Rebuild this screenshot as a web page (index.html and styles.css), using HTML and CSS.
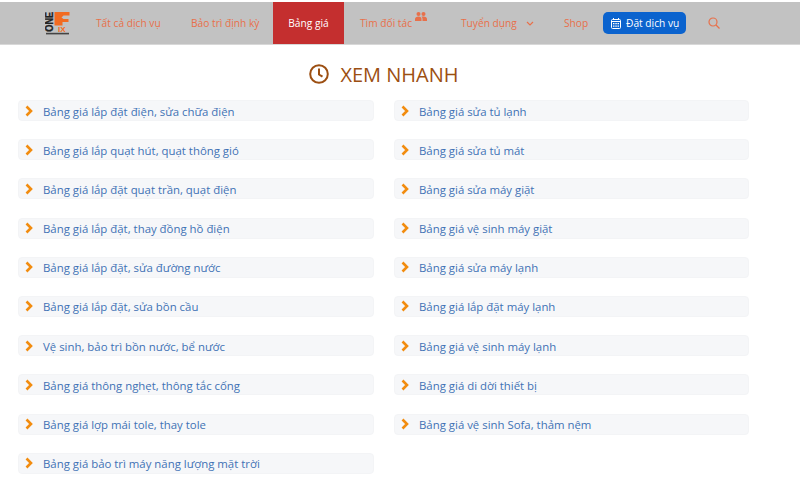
FILE: index.html
```html
<!DOCTYPE html>
<html lang="vi">
<head>
<meta charset="UTF-8">
<meta name="viewport" content="width=device-width, initial-scale=1.0">
<title>Bảng giá</title>
<link rel="stylesheet" href="styles.css">
</head>
<body>
<nav class="topnav">
    <a class="logo" href="#">
        <svg width="26" height="24" viewBox="0 0 26 24">
            <text class="logo-one" transform="translate(7.500 20.800) rotate(-90)" x="0" y="0" textLength="20" lengthAdjust="spacingAndGlyphs">ONE</text>
            <path d="M9.500 1h15v3.500h-6l-2 2 2 1.500h5v3h-6v3.500h-8z" fill="#f26b21"/>
            <text class="logo-fix" x="13" y="21">IX</text>
            <rect x="1" y="21.800" width="23" height="1.600" fill="#444"/>
        </svg>
    </a>
    <a class="nav-link link-services" href="#">Tất cả dịch vụ</a>
    <a class="nav-link link-maint" href="#">Bảo trì định kỳ</a>
    <a class="nav-link active" href="#">Bảng giá</a>
    <a class="nav-link link-partner" href="#">Tìm đối tác
        <svg class="people" width="12" height="9" viewBox="0 0 12 9"><circle cx="3.500" cy="2" r="2"/><circle cx="8.500" cy="2" r="2"/><path d="M0 9v-2c0-1.500 1.500-2.500 3.500-2.500s3 1 3 2.500v2zM7.500 9v-2c0-1-.3-1.800-1-2.300.6-.2 1.300-.2 2-.2 2 0 3.500 1 3.500 2.500v2z"/></svg>
    </a>
    <a class="nav-link link-jobs" href="#">Tuyển dụng
        <svg class="caret" width="8" height="5" viewBox="0 0 8 5"><path d="M1 1l3 3 3-3" fill="none" stroke="#e8704a" stroke-width="1.200"/></svg>
    </a>
    <a class="nav-link link-shop" href="#">Shop</a>
    <a class="book-btn" href="#">
        <svg width="10" height="11" viewBox="0 0 10 11"><path d="M1.500 1.500h7a1 1 0 0 1 1 1v7a1 1 0 0 1-1 1h-7a1 1 0 0 1-1-1v-7a1 1 0 0 1 1-1z" fill="none" stroke="#fff"/><path d="M.5 3.500h9" stroke="#fff"/><path d="M2.500 0v2M7.500 0v2" stroke="#fff"/><path d="M2 5h1.500v1.200H2zM4.300 5h1.500v1.200H4.300zM6.500 5H8v1.200H6.500zM2 7.500h1.500v1.200H2zM4.300 7.500h1.500v1.200H4.300zM6.500 7.500H8v1.200H6.500z" fill="#fff"/></svg>
        Đặt dịch vụ
    </a>
    <a class="search" href="#">
        <svg width="12" height="12" viewBox="0 0 12 12"><circle cx="5" cy="5" r="4" fill="none" stroke="#e8704a" stroke-width="1.200"/><path d="M8 8l3.500 3.500" stroke="#e8704a" stroke-width="1.200"/></svg>
    </a>
</nav>

<h2 class="title">
    <svg width="20" height="20" viewBox="0 0 20 20"><circle cx="10" cy="10" r="8.800" fill="none" stroke="#9c4f12" stroke-width="2"/><path d="M10 4.500v6l3.500 2.200" fill="none" stroke="#9c4f12" stroke-width="2"/></svg>
    XEM NHANH
</h2>

<div class="price-grid" id="priceGrid"></div>

<script>
    const rows = [
        'Bảng giá lắp đặt điện, sửa chữa điện', 'Bảng giá sửa tủ lạnh',
        'Bảng giá lắp quạt hút, quạt thông gió', 'Bảng giá sửa tủ mát',
        'Bảng giá lắp đặt quạt trần, quạt điện', 'Bảng giá sửa máy giặt',
        'Bảng giá lắp đặt, thay đồng hồ điện', 'Bảng giá vệ sinh máy giặt',
        'Bảng giá lắp đặt, sửa đường nước', 'Bảng giá sửa máy lạnh',
        'Bảng giá lắp đặt, sửa bồn cầu', 'Bảng giá lắp đặt máy lạnh',
        'Vệ sinh, bảo trì bồn nước, bể nước', 'Bảng giá vệ sinh máy lạnh',
        'Bảng giá thông nghẹt, thông tắc cống', 'Bảng giá di dời thiết bị',
        'Bảng giá lợp mái tole, thay tole', 'Bảng giá vệ sinh Sofa, thảm nệm',
        'Bảng giá bảo trì máy năng lượng mặt trời'
    ];
    const grid = document.getElementById('priceGrid');
    rows.forEach(name => {
        const row = document.createElement('a');
        row.className = 'price-row';
        row.href = '#';
        row.innerHTML = `
            <svg width="8" height="12" viewBox="0 0 8 12"><path d="M1.500 1.500L6 6l-4.500 4.500" fill="none" stroke="#f28c0f" stroke-width="2.600"/></svg>
            <span class="row-text">${name}</span>
        `;
        grid.appendChild(row);
    });
</script>
</body>
</html>
```

FILE: styles.css
```css
body{
    margin: 0;
    font-family: "Open Sans", sans-serif;
    background-color: #fff;
    overflow: hidden;
}
a{
    text-decoration: none;
}
.topnav{
    display: flex;
    align-items: stretch;
    height: 42px;
    margin-top: 2px;
    background-color: #c2c2c2;
    border-bottom: 1px solid #d8d8d8;
    padding-left: 45px;
    font-size: 10.200px;
}
.logo{
    display: flex;
    align-items: center;
    width: 51px;
}
.logo-one{
    font-family: "Liberation Sans", sans-serif;
    font-size: 10px;
    font-weight: 700;
    fill: #222;
    stroke: #222;
    stroke-width: .3px;
}
.logo-fix{
    font-family: "Liberation Sans", sans-serif;
    font-size: 8px;
    font-weight: 700;
    fill: #f26b21;
}
.nav-link{
    display: flex;
    flex: none;
    align-items: center;
    color: #e8704a;
}
.link-services{
    width: 95px;
}
.link-maint{
    width: 82px;
}
.active{
    justify-content: center;
    width: 71px;
    background-color: #c42f2f;
    color: #fff;
}
.link-partner{
    width: 117px;
    padding-left: 16px;
    box-sizing: border-box;
    gap: 1px;
}
.people{
    fill: #e8704a;
    margin: -14px 0 0 2px;
}
.link-jobs{
    width: 103px;
    gap: 9px;
}
.link-shop{
    width: 39px;
}
.book-btn{
    display: flex;
    flex: none;
    align-items: center;
    gap: 5px;
    align-self: center;
    height: 22px;
    width: 83px;
    box-sizing: border-box;
    padding-left: 8px;
    background-color: #0b63ce;
    border-radius: 5px;
    color: #fff;
    white-space: nowrap;
}
.search{
    display: flex;
    align-items: center;
    margin-left: 22px;
}
.title{
    display: flex;
    align-items: center;
    justify-content: center;
    gap: 11px;
    height: 22px;
    margin: 18px 0 0;
    padding-right: 32px;
    font-size: 20px;
    font-weight: 400;
    color: #9c4f12;
}
.price-grid{
    display: grid;
    grid-template-columns: 356px 355px;
    column-gap: 20px;
    row-gap: 18.200px;
    margin: 15px 0 0 18px;
}
.price-row{
    display: flex;
    align-items: center;
    gap: 10px;
    height: 21px;
    padding-left: 6px;
    background-color: #f6f7f9;
    border: 1px solid #f3f4f6;
    border-radius: 4px;
    box-sizing: border-box;
    font-size: 11.400px;
    color: #3f72b5;
}
.row-text{
    padding-top: 1px;
}
```
